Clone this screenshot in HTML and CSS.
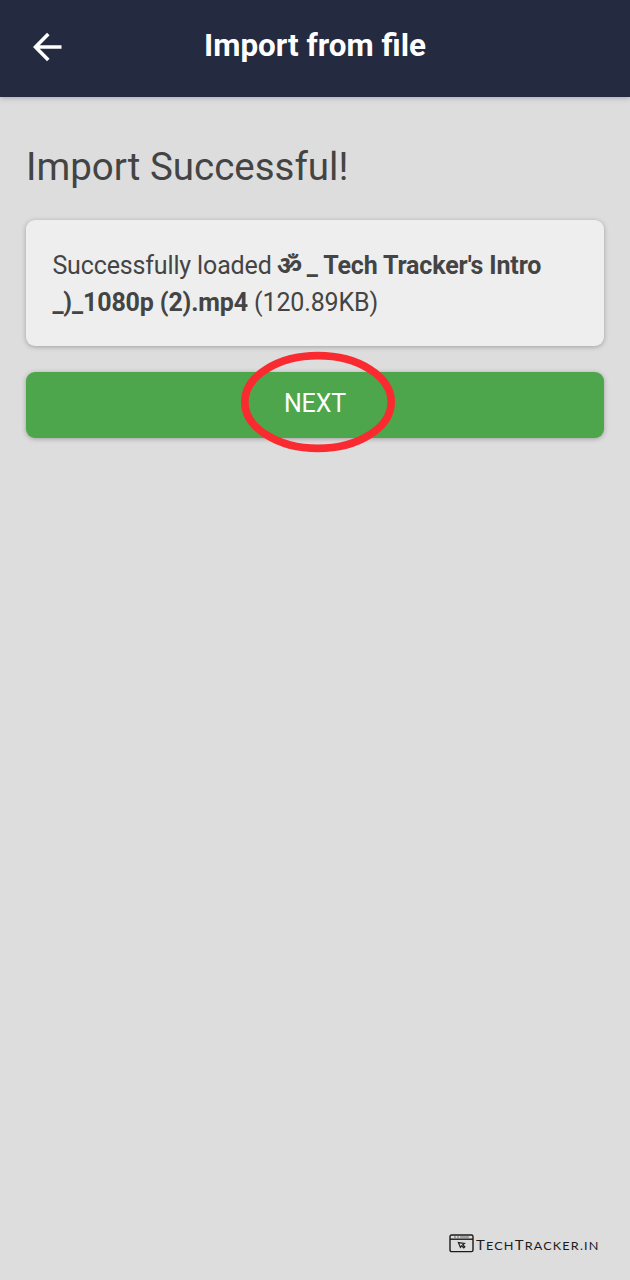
FILE: index.html
```html
<!DOCTYPE html>
<html lang="en">
<head>
<meta charset="utf-8">
<title>Import from file</title>
<link rel="stylesheet" href="styles.css">
</head>
<body>
<header class="topbar">
  <svg class="back" viewBox="0 0 30 30" aria-label="Back"><path d="M15.3 2 2.5 15l12.8 13M3 15h25.5"/></svg>
  <h1 class="title">Import from file</h1>
</header>
<main class="content">
  <h2 class="heading">Import Successful!</h2>
  <section class="card">
    <p class="line">Successfully loaded <b><span class="om">ॐ</span> _ Tech Tracker's Intro</b></p>
    <p class="line"><b>_)_1080p (2).mp4</b> (120.89KB)</p>
  </section>
  <button class="next"><span>NEXT</span>
    <svg class="ring" viewBox="0 0 156 102"><ellipse cx="78" cy="51" rx="73.2" ry="46.4"/></svg>
  </button>
</main>
<footer class="brand">
  <svg class="brand-icon" viewBox="0 0 25 19">
    <rect x="1" y="1" width="23" height="16.6" rx="1.6"/>
    <path d="M1 5.2h23"/>
    <path class="bar" d="M5 3h2m1 0h2m1 0h9"/>
    <path class="cursor" d="m9.4 8.6 6 .8-1.6 1.4 2 2-1 1-2.2-2-1.2 1.6z"/>
  </svg>
  <span class="brand-name">T<small>ECH</small>T<small>RACKER.IN</small></span>
</footer>
</body>
</html>
```
FILE: styles.css
```css
* { box-sizing: border-box; }
body {
  margin: 0;
  height: 1280px;
  display: flex;
  flex-direction: column;
  background: #ddd;
  color: #444;
  font-family: Roboto, "Noto Sans", sans-serif;
}
.topbar {
  height: 97px;
  display: grid;
  grid-template-columns: 62px 1fr 62px;
  background: #242a40;
  color: #fff;
  box-shadow: 0 1px 5px rgba(36, 42, 80, .3);
}
.back {
  width: 30px;
  height: 30px;
  margin: 32px 0 0 33px;
  fill: none;
  stroke: #fff;
  stroke-width: 3.6;
}
.title {
  margin: 27px 0 0;
  text-align: center;
  font-size: 31.4px;
  line-height: 38px;
  font-weight: 700;
}
.content {
  flex: 1;
  padding: 44px 26px 0;
}
.heading {
  margin: 0 0 27px;
  font-size: 38.5px;
  line-height: 52px;
  font-weight: 400;
  white-space: nowrap;
}
.card {
  height: 126px;
  padding: 27px 26.4px;
  border-radius: 9px;
  background: #eee;
  box-shadow: 0 1px 5px rgba(0, 0, 0, .28);
}
.line {
  margin: 0;
  font-size: 25px;
  line-height: 37px;
  height: 37px;
  letter-spacing: -.14px;
  white-space: nowrap;
}
.om { display: inline-block; width: 24px; line-height: 1; margin-left: -1px; }
.next {
  position: relative;
  display: flex;
  justify-content: center;
  width: 100%;
  height: 66px;
  margin-top: 26px;
  padding: 17px 0 0;
  border: 0;
  border-radius: 9px;
  background: #4da64b;
  box-shadow: 0 1px 5px rgba(0, 0, 0, .28);
  color: #fff;
  font: 400 25px/30px Roboto, sans-serif;
  letter-spacing: -.1px;
}
.ring {
  position: absolute;
  left: 214px;
  top: -21px;
  width: 156px;
  height: 102px;
  fill: none;
  stroke: #f92b30;
  stroke-width: 7.6;
}
.brand {
  display: flex;
  align-items: flex-start;
  height: 46px;
  padding-left: 449px;
  color: #1c1c1c;
}
.brand-icon {
  flex: none;
  width: 25px;
  height: 19px;
  fill: none;
  stroke: #1c1c1c;
  stroke-width: 1.4;
}
.brand-icon .bar { stroke: #666; stroke-width: 1; }
.brand-icon .cursor { fill: none; stroke-width: 1.2; }
.brand-name {
  margin: 3px 0 0 2px;
  font: 13px/16px Lato, sans-serif;
  letter-spacing: 1px;
  transform: scaleX(1.15);
  transform-origin: left;
}
.brand-name small { font-size: 11px; }
```
